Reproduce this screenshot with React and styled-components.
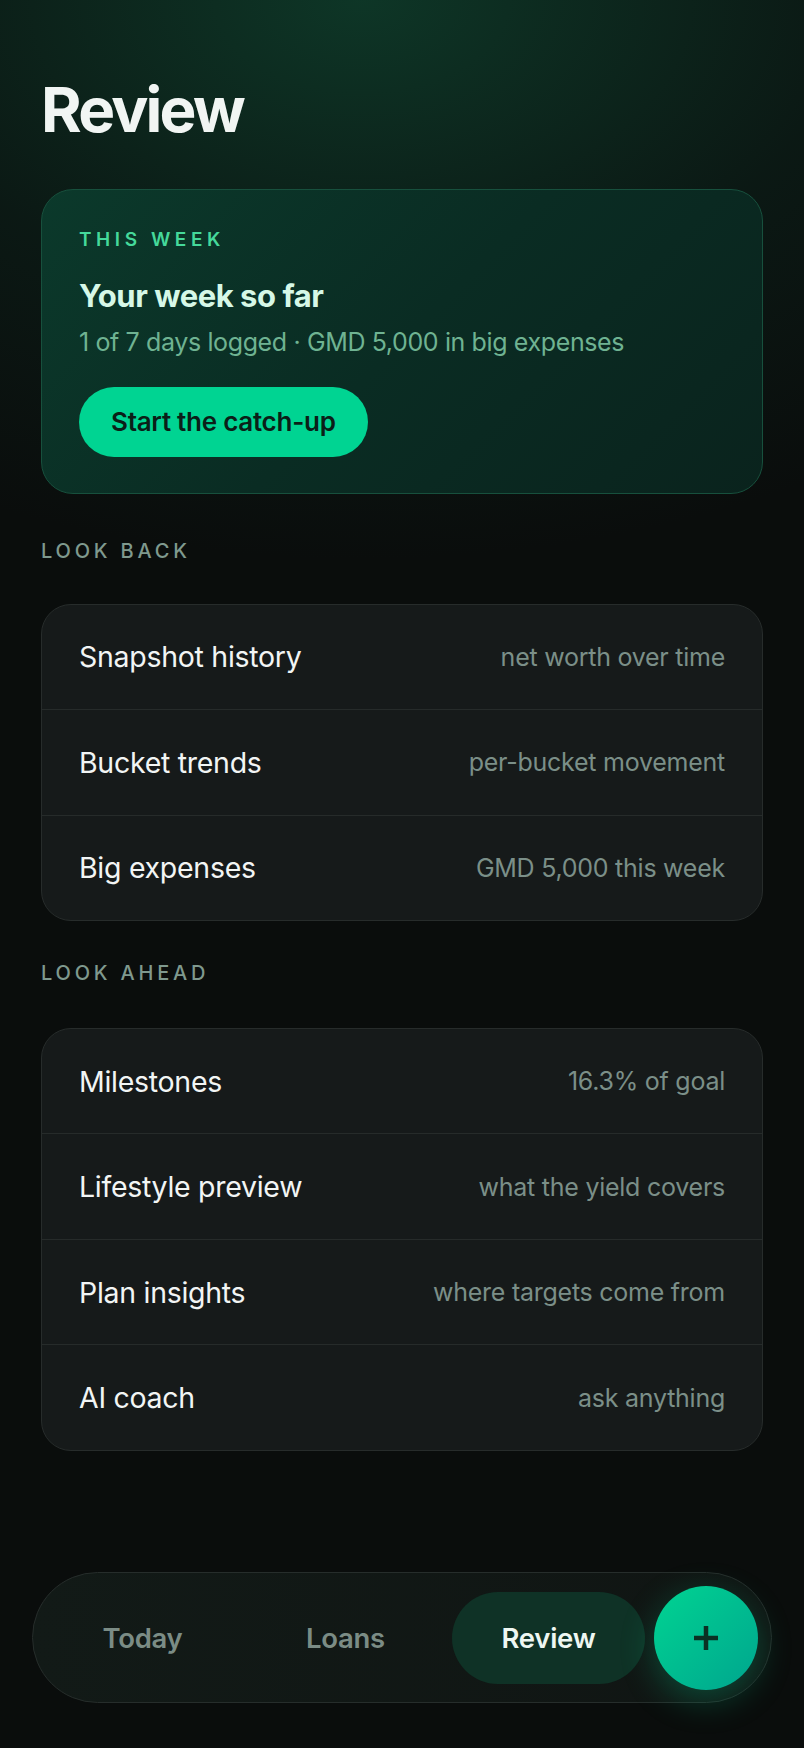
import React from 'react';
import styled, { createGlobalStyle } from 'styled-components';

const GlobalStyle = createGlobalStyle`
  html, body {
    margin: 0;
    padding: 0;
    background: #0a0d0c;
  }
  body {
    font-family: Inter, "Noto Sans", sans-serif;
    -webkit-font-smoothing: antialiased;
  }
  * {
    box-sizing: border-box;
  }
`;

const Page = styled.div`
  min-height: 100vh;
  display: flex;
  flex-direction: column;
  padding: 73px 41px 45px;
  background:
    radial-gradient(ellipse 110% 32% at 45% 0%, rgba(14, 56, 40, 0.95) 0%, rgba(12, 36, 28, 0.5) 55%, rgba(10, 13, 12, 0) 100%),
    #0a0d0c;
`;

const Title = styled.h1`
  margin: 0;
  font-size: 62px;
  line-height: 1.2;
  font-weight: 700;
  letter-spacing: -0.045em;
  color: #f1f5f3;
`;

const WeekCard = styled.section`
  margin-top: 42px;
  padding: 38.5px 37px 36px;
  border-radius: 32px;
  border: 1px solid #17503d;
  background: linear-gradient(135deg, #0b392b 0%, #0a2c23 50%, #0a231d 100%);
  display: flex;
  flex-direction: column;
  align-items: flex-start;
`;

const Eyebrow = styled.div`
  font-size: 19px;
  line-height: 1.2;
  font-weight: 600;
  letter-spacing: 0.24em;
  color: #45d99b;
`;

const CardHeading = styled.h2`
  margin: 25.8px 0 0;
  font-size: 31px;
  line-height: 1.2;
  font-weight: 700;
  letter-spacing: -0.015em;
  color: #d6f8e7;
`;

const CardText = styled.p`
  margin: 12px 0 0;
  font-size: 25px;
  line-height: 1.2;
  font-weight: 400;
  letter-spacing: -0.015em;
  color: #6fb392;
`;

const CatchUpButton = styled.button`
  margin-top: 30px;
  height: 70px;
  padding: 0 32px;
  border: none;
  border-radius: 35px;
  background: #00d492;
  color: #0b1f18;
  font-family: inherit;
  font-size: 26px;
  font-weight: 600;
  letter-spacing: -0.01em;
  cursor: pointer;
`;

const SectionLabel = styled.div`
  margin-top: ${(p) => p.$top}px;
  font-size: 20px;
  line-height: 1.2;
  font-weight: 500;
  letter-spacing: 0.19em;
  color: #7f998e;
`;

const List = styled.div`
  margin-top: ${(p) => p.$top}px;
  border-radius: 30px;
  border: 1px solid #272c2b;
  background: #161a1a;
  overflow: hidden;
`;

const Row = styled.div`
  box-sizing: content-box;
  height: 104.5px;
  padding: 0 37px;
  display: flex;
  align-items: center;
  justify-content: space-between;
  & + & {
    border-top: 1px solid #262b2a;
  }
`;

const RowTitle = styled.span`
  font-size: 28.5px;
  font-weight: 400;
  letter-spacing: -0.01em;
  color: #f2f5f4;
`;

const RowMeta = styled.span`
  font-size: 25px;
  font-weight: 400;
  letter-spacing: -0.01em;
  color: #7b8f88;
`;

const NavBar = styled.nav`
  margin: auto -9px 0;
  height: 131px;
  padding: 0 13px;
  border-radius: 66px;
  border: 1px solid #262d2b;
  background: linear-gradient(90deg, #121a17 0%, #101513 100%);
  display: flex;
  align-items: center;
  gap: 10px;
`;

const Tab = styled.div`
  width: 193px;
  height: 92px;
  border-radius: 46px;
  display: flex;
  align-items: center;
  justify-content: center;
  font-size: 27.5px;
  font-weight: 600;
  letter-spacing: -0.01em;
  color: ${(p) => (p.$active ? '#eef7f2' : '#7b8c85')};
  background: ${(p) => (p.$active ? '#0f3226' : 'transparent')};
`;

const AddButton = styled.button`
  margin-left: -1px;
  width: 104px;
  height: 104px;
  flex-shrink: 0;
  border: none;
  border-radius: 50%;
  background: linear-gradient(135deg, #00d492 0%, #00a58e 100%);
  box-shadow: 0 10px 34px rgba(0, 212, 146, 0.28);
  display: flex;
  align-items: center;
  justify-content: center;
  cursor: pointer;
`;

const lookBack = [
  ['Snapshot history', 'net worth over time'],
  ['Bucket trends', 'per-bucket movement'],
  ['Big expenses', 'GMD 5,000 this week'],
];

const lookAhead = [
  ['Milestones', '16.3% of goal'],
  ['Lifestyle preview', 'what the yield covers'],
  ['Plan insights', 'where targets come from'],
  ['AI coach', 'ask anything'],
];

const App = () => {
  return (
    <>
      <GlobalStyle />
      <Page>
        <Title>Review</Title>

        <WeekCard>
          <Eyebrow>THIS WEEK</Eyebrow>
          <CardHeading>Your week so far</CardHeading>
          <CardText>1 of 7 days logged · GMD 5,000 in big expenses</CardText>
          <CatchUpButton>Start the catch-up</CatchUpButton>
        </WeekCard>

        <SectionLabel $top={45.3}>LOOK BACK</SectionLabel>
        <List $top={40.7}>
          {lookBack.map(([title, meta]) => (
            <Row key={title}>
              <RowTitle>{title}</RowTitle>
              <RowMeta>{meta}</RowMeta>
            </Row>
          ))}
        </List>

        <SectionLabel $top={39.8}>LOOK AHEAD</SectionLabel>
        <List $top={43}>
          {lookAhead.map(([title, meta]) => (
            <Row key={title}>
              <RowTitle>{title}</RowTitle>
              <RowMeta>{meta}</RowMeta>
            </Row>
          ))}
        </List>

        <NavBar>
          <Tab>Today</Tab>
          <Tab>Loans</Tab>
          <Tab $active>Review</Tab>
          <AddButton aria-label="Add">
            <svg width="26" height="26" viewBox="0 0 26 26">
              <path d="M13 1v24M1 13h24" stroke="#0b3024" strokeWidth="4.5" />
            </svg>
          </AddButton>
        </NavBar>
      </Page>
    </>
  );
};

export default App;
